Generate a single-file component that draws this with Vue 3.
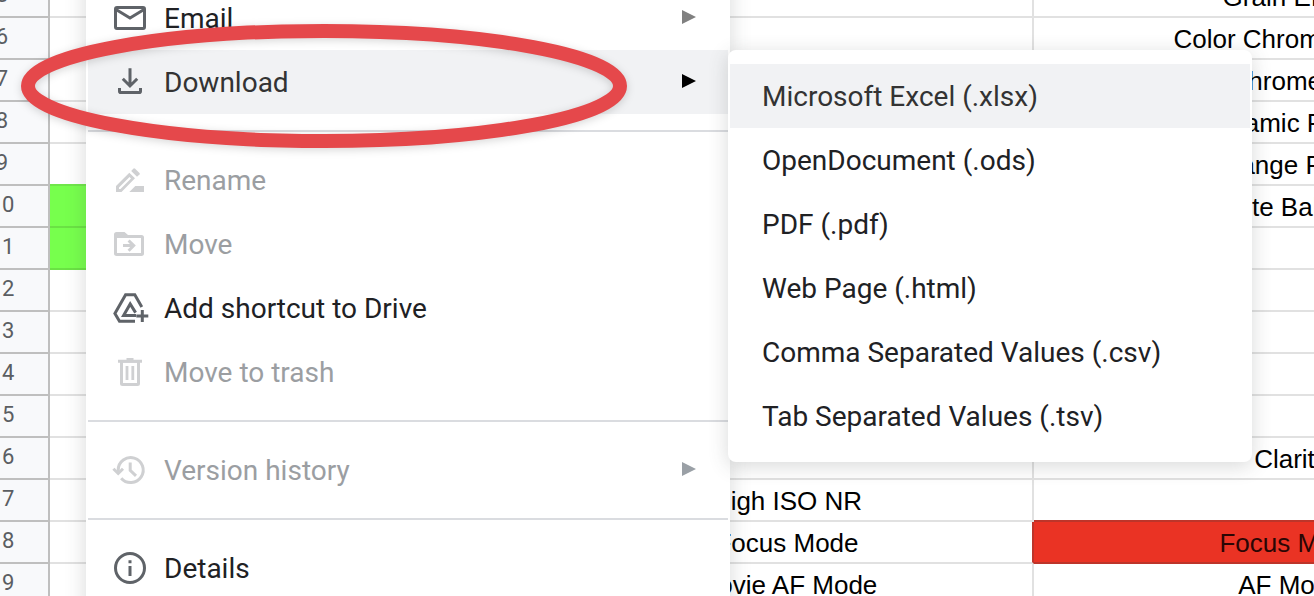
<script setup>
const rows = [
  { n: 5, b: '', c: 'Grain Effect' },
  { n: 6, b: '', c: 'Color Chrome Effect' },
  { n: 7, b: '', c: 'Color Chrome FX Blue' },
  { n: 8, b: '', c: 'Dynamic Range' },
  { n: 9, b: '', c: 'D Range Priority', aClass: 'above-green' },
  { n: 10, b: '', c: 'White Balance', aClass: 'green' },
  { n: 11, b: '', c: '', aClass: 'green' },
  { n: 12, b: '', c: '' },
  { n: 13, b: '', c: '' },
  { n: 14, b: '', c: '' },
  { n: 15, b: '', c: '' },
  { n: 16, b: '', c: 'Clarity' },
  { n: 17, b: 'High ISO NR', c: '', cClass: 'above-red' },
  { n: 18, b: 'Focus Mode', c: 'Focus Mode', bClass: 'before-red', cClass: 'red' },
  { n: 19, b: 'Movie AF Mode', c: 'AF Mode' },
]

const groups = [
  [
    { label: 'Email', icon: 'email', arrow: true },
    { label: 'Download', icon: 'download', arrow: true, active: true },
  ],
  [
    { label: 'Rename', icon: 'rename', disabled: true },
    { label: 'Move', icon: 'move', disabled: true },
    { label: 'Add shortcut to Drive', icon: 'drive' },
    { label: 'Move to trash', icon: 'trash', disabled: true },
  ],
  [{ label: 'Version history', icon: 'history', arrow: true, disabled: true }],
  [{ label: 'Details', icon: 'info' }],
]

const formats = [
  'Microsoft Excel (.xlsx)',
  'OpenDocument (.ods)',
  'PDF (.pdf)',
  'Web Page (.html)',
  'Comma Separated Values (.csv)',
  'Tab Separated Values (.tsv)',
]
</script>

<template>
  <main class="screen">
    <table class="sheet">
      <colgroup>
        <col class="col-head" />
        <col class="col-a" />
        <col class="col-b" />
        <col class="col-c" />
      </colgroup>
      <tbody>
        <tr v-for="row in rows" :key="row.n">
          <th scope="row">{{ row.n }}</th>
          <td :class="row.aClass"></td>
          <td :class="row.bClass">{{ row.b }}</td>
          <td :class="row.cClass">{{ row.c }}</td>
        </tr>
      </tbody>
    </table>

    <div class="menu file-menu" role="menu" aria-label="File">
      <div v-for="(group, g) in groups" :key="g" class="group" role="group">
        <button
          v-for="item in group"
          :key="item.label"
          type="button"
          role="menuitem"
          class="item"
          :class="{ active: item.active }"
          :disabled="item.disabled"
        >
          <svg class="icon" viewBox="0 0 36 36" aria-hidden="true">
            <g v-if="item.icon === 'email'" class="line">
              <rect x="3.5" y="7.5" width="29" height="21" rx="1.5" />
              <path d="M4 9.5L18 18L32 9.5" />
            </g>
            <g v-else-if="item.icon === 'download'" class="line">
              <path d="M18 4.3V22M10.8 14.8L18 22L25.2 14.8" />
              <path d="M7.5 24V27.2Q7.5 28.5 8.8 28.5H27.2Q28.5 28.5 28.5 27.2V24" />
            </g>
            <g v-else-if="item.icon === 'rename'" class="solid">
              <path fill-rule="evenodd" d="M4 30V24L17.3 10.7L23 16.3L9.5 30ZM7 27H8.5L19 16.4L17.5 15L7 25.5Z" />
              <path d="M19.2 9L21.3 6.7Q22.2 5.9 23.1 6.7L27.5 11Q28.2 11.8 27.5 12.5L25 14.8Z" />
              <path d="M17.3 30L23.3 24H32V30Z" />
            </g>
            <g v-else-if="item.icon === 'move'">
              <path class="solid" fill-rule="evenodd" d="M4.5 6H12.5L16 9H29.5Q32 9 32 11.5V27.5Q32 30 29.5 30H4.5Q2 30 2 27.5V8.5Q2 6 4.5 6ZM5 12V27H29V12Z" />
              <path class="line" d="M11 19.6H21.5M16.6 14.5L21.7 19.6L16.6 24.7" />
            </g>
            <g v-else-if="item.icon === 'drive'" class="line">
              <path d="M29.8 17L22.8 4.7H13.6L2.9 23.5L7.5 31.3H23" />
              <path d="M24 25.5H11.6L18.2 14L23.6 22.6" />
              <path d="M30.3 20V32M24.3 26H36.3" />
            </g>
            <g v-else-if="item.icon === 'trash'" class="solid">
              <path d="M6 5.7H14.5V4H21.5V5.7H30V8.7H6Z" />
              <path fill-rule="evenodd" d="M8 8H28V29.5Q28 32 25.5 32H10.5Q8 32 8 29.5ZM11 8.7V29H25V8.7Z" />
              <path d="M13.6 12H16.4V26H13.6ZM19.4 12H22.2V26H19.4Z" />
            </g>
            <g v-else-if="item.icon === 'history'" class="line">
              <path d="M6.2 21V18A12.5 12.5 0 1 1 9.2 26.2" />
              <path d="M1.4 16.7L6.2 21.5L11 16.7M18.2 10.5V18.3L24 23.8" />
            </g>
            <g v-else class="line">
              <circle cx="18" cy="18" r="14.5" />
              <path d="M18 16V26M18 10.2V13.2" />
            </g>
          </svg>
          <span class="label">{{ item.label }}</span>
          <svg v-if="item.arrow" class="arrow" viewBox="0 0 14 14" aria-hidden="true">
            <path d="M0 0L14 7L0 14Z" />
          </svg>
        </button>
      </div>
    </div>

    <div class="menu submenu" role="menu" aria-label="Download">
      <button
        v-for="(format, i) in formats"
        :key="format"
        type="button"
        role="menuitem"
        class="item"
        :class="{ active: i === 0 }"
      >
        <span class="label">{{ format }}</span>
      </button>
    </div>

    <svg class="marker" viewBox="0 0 606 124" aria-hidden="true">
      <ellipse cx="303" cy="62" rx="296" ry="55" />
    </svg>
  </main>
</template>

<style>
body {
  margin: 0;
  background: #fff;
}
</style>

<style scoped>
.screen {
  position: relative;
  height: 100vh;
  overflow: hidden;
  background: #fff;
}

.sheet {
  table-layout: fixed;
  width: 1592px;
  margin: -24px 0 0 -44px;
  border-collapse: separate;
  border-spacing: 0;
  font-family: "Liberation Sans", Arial, sans-serif;
  font-size: 26px;
  line-height: 30px;
  color: #000;
}

.col-head {
  width: 94px;
}

.col-a {
  width: 490px;
}

.col-b {
  width: 494px;
}

.col-c {
  width: 514px;
}

.sheet th,
.sheet td {
  box-sizing: border-box;
  height: 42px;
  padding: 2px 0 0 2px;
  border: solid #e1e1e1;
  border-width: 0 2px 2px 0;
  text-align: center;
  vertical-align: middle;
  white-space: nowrap;
}

.sheet th {
  padding: 0 0 2px;
  border-color: #bfbfbf;
  background: #f8f9fb;
  color: #5b5e62;
  font-family: Roboto, Arial, sans-serif;
  font-size: 22px;
  font-weight: 400;
}

.sheet .above-green {
  border-bottom-color: #6fe64a;
}

.sheet .green {
  background: #77ff4d;
  border-color: #6ae244;
}

.sheet .above-red {
  border-bottom-color: #bd352a;
}

.sheet .before-red {
  border-right-color: #bd352a;
}

.sheet .red {
  background: #ea3324;
  border-color: #bd352a;
  color: #2b0604;
}

.menu {
  position: absolute;
  box-sizing: border-box;
  border: 2px solid #fff;
  background: #fff;
  font-family: Roboto, Arial, sans-serif;
  font-size: 28px;
  line-height: 32px;
}

.file-menu {
  top: -28px;
  left: 86px;
  width: 644px;
  padding: 12px 0;
  box-shadow: 0 4px 20px rgba(60, 64, 67, 0.2);
}

.group + .group {
  margin-top: 16px;
  padding-top: 16px;
  border-top: 2px solid #dadce0;
}

.submenu {
  top: 50px;
  left: 728px;
  width: 524px;
  padding: 12px 0;
  border-radius: 8px;
  box-shadow: 0 4px 20px rgba(60, 64, 67, 0.2);
}

.item {
  display: flex;
  align-items: center;
  gap: 16px;
  box-sizing: border-box;
  width: 100%;
  height: 64px;
  margin: 0;
  padding: 0 32px 0 24px;
  border: 0;
  background: transparent;
  color: #202124;
  font: inherit;
  text-align: left;
  white-space: nowrap;
}

.submenu .item {
  padding: 0 32px;
}

.item.active {
  background: #f1f2f4;
  color: #333;
}

.item:disabled {
  color: #9b9ea2;
}

.label {
  flex: 1;
  padding-top: 2px;
}

.icon {
  flex: none;
  width: 36px;
  height: 36px;
  overflow: visible;
  color: #5f6368;
}

.item:disabled .icon {
  color: #cfd0d2;
}

.line {
  fill: none;
  stroke: currentColor;
  stroke-width: 3;
}

.solid {
  fill: currentColor;
}

.arrow {
  flex: none;
  width: 14px;
  height: 14px;
  padding-bottom: 2px;
  fill: #808080;
}

.active .arrow {
  fill: #000;
}

.item:disabled .arrow {
  fill: #9aa0a6;
}

.marker {
  position: absolute;
  top: 24px;
  left: 21px;
  width: 606px;
  height: 124px;
  overflow: visible;
  fill: none;
  stroke: #e5484b;
  stroke-width: 14;
  filter: drop-shadow(0 2px 4px rgba(0, 0, 0, 0.16));
  pointer-events: none;
}
</style>
